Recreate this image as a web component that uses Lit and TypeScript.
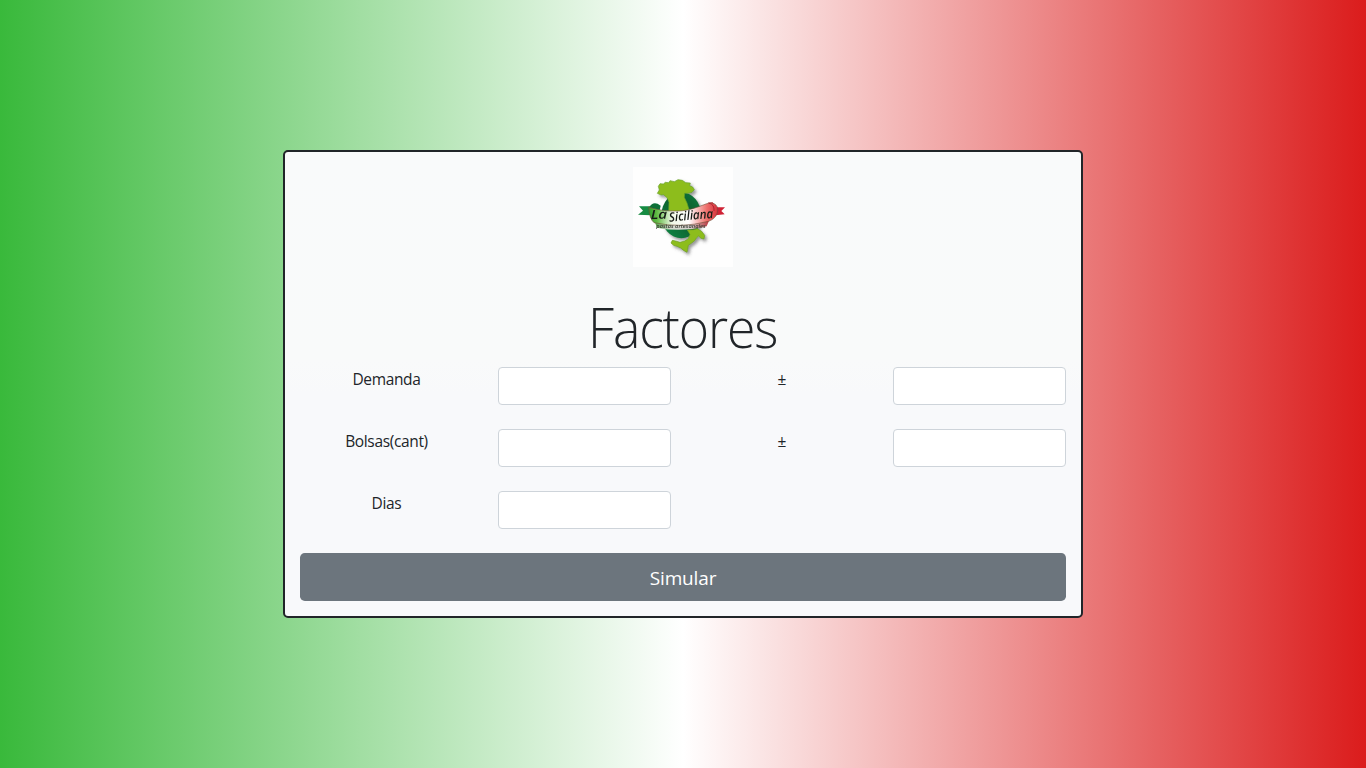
import { LitElement, html, css, svg, nothing } from "lit";
import { customElement } from "lit/decorators.js";

@customElement("siciliana-logo")
class SicilianaLogo extends LitElement {
  static styles = css`
    :host { display: block; width: 100px; height: 100px; }
    .logo { display: block; width: 100%; height: 100%; }
    .brand { font: italic 600 38px "Open Sans", sans-serif; }
    .tag { font: italic 600 14px "Open Sans", sans-serif; }
  `;
  render() {
    return html`<svg class="logo" viewBox="15 15 300 300" role="img" aria-label="La Siciliana">
      ${svg`
      <defs>
        <linearGradient id="ribbon" x1="0" x2="1">
          <stop offset="0" stop-color="#2f9a2c"/><stop offset=".12" stop-color="#62bb45"/>
          <stop offset=".34" stop-color="#f1f8e8"/><stop offset=".58" stop-color="#fff"/>
          <stop offset=".84" stop-color="#ee706c"/><stop offset="1" stop-color="#d62f3b"/>
        </linearGradient>
        <linearGradient id="under" x1="0" x2="1">
          <stop offset="0" stop-color="#4a9b3c"/><stop offset=".3" stop-color="#d5dbd0"/>
          <stop offset=".65" stop-color="#d8d2d0"/><stop offset="1" stop-color="#b8343d"/>
        </linearGradient>
        <linearGradient id="oval" x1="0" x2="1" y1="1" y2="0"><stop offset="0" stop-color="#128a48"/><stop offset=".6" stop-color="#085a2a"/><stop offset="1" stop-color="#118143"/></linearGradient>
        <filter id="shadow" x="-20%" y="-20%" width="150%" height="150%">
          <feDropShadow dx="6" dy="7" stdDeviation="4" flood-color="#444" flood-opacity=".55"/>
        </filter>
        <filter id="soft"><feGaussianBlur stdDeviation=".8"/></filter>
      </defs>
      <rect x="15" y="15" width="300" height="300" fill="#fefefe"/>
      <g filter="url(#soft)">
        <g filter="url(#shadow)">
          <ellipse cx="160" cy="160" rx="60" ry="69" fill="url(#oval)"/>
          <path d="M99 99 88 94 94 84 91 73 96 65 106 66 112 61 122 62 126 56 139 59 150 53 163 55 173 62 187 63 185 71 194 75 199 83 192 91 180 94 170 94 169 106 177 123 186 152 122 152 123 121 118 108 107 98Z" fill="#8dbd1e" stroke="#66a12b" stroke-width="2"/>
          <path d="M178 204 196 203 208 200 221 208 230 220 228 231 219 229 212 222 205 228 200 236 190 244 181 250 179 262 177 271 168 266 158 258 147 253 137 250 129 243 133 235 143 237 156 241 170 237 181 230 186 217Z" fill="#8dbd1e" stroke="#6c9b24" stroke-width="2"/>
        </g>
        <path d="M66 133 33 133 45 146 30 158 68 160Z" fill="#168b43"/>
        <path d="M64 136Q76 114 98 131L94 150 66 151Z" fill="#087039"/>
        <path d="M240 122 254 121 263 136 291 136 280 147 290 157 262 160 252 148Z" fill="#cf2034"/>
        <path d="M79 176Q158 200 244 174L236 193Q158 212 87 197Z" fill="url(#under)"/>
        <path d="M62 135C92 145 122 148 151 147C184 146 207 136 236 125C254 118 271 128 269 145C268 161 257 173 241 178Q158 200 78 182Q64 171 62 135Z" fill="url(#ribbon)" stroke="#714e35" stroke-width="1.8"/>
        <path d="M242 123Q260 127 258 147" fill="none" stroke="#a31926" stroke-width="2.5"/>
        <g fill="#171b16">
          <text class="brand" x="68" y="171" transform="rotate(-1 68 171)" textLength="50" lengthAdjust="spacingAndGlyphs">La</text>
          <text class="brand" x="124" y="179" transform="rotate(-5 124 179)" textLength="133" lengthAdjust="spacingAndGlyphs">Siciliana</text>
        </g>
        <text class="tag" x="85" y="199" fill="#393c34" textLength="148" lengthAdjust="spacingAndGlyphs">pastas artesanales</text>
      </g>`}
    </svg>`;
  }
}

@customElement("app-root")
class AppRoot extends LitElement {
  static styles = css`
    :host {
      display: flex; align-items: center; justify-content: center;
      height: 100vh; color: #212529;
      font: 400 16px/24px "Open Sans", "Noto Sans", sans-serif;
      background: linear-gradient(90deg, #39b93b 0%, #fff 50%, #db1c1c 100%);
    }
    * { box-sizing: border-box; }
    .card {
      width: 800px; height: 468px; padding: 15px; border: 2px solid #212529;
      border-radius: 5px; background: linear-gradient(#f9fafb, #f9fafa 45%, #f8f9fb 52%);
      display: flex; flex-direction: column; align-items: center;
    }
    .title {
      margin: 26px 0 7px; font-size: 55px; line-height: 67px; font-weight: 300;
      letter-spacing: -1.2px; height: 67px; transform: scaleX(0.94);
    }
    .form { width: 100%; display: grid; gap: 24px; }
    .row { display: grid; grid-template-columns: repeat(4, 173px); justify-content: space-between; height: 38px; text-align: center; }
    .label { font-size: 15.5px; letter-spacing: -0.35px; }
    .input { width: 100%; height: 38px; border: 1px solid #ced4da; border-radius: 4px; background: #fff; padding: 6px 12px; font: inherit; }
    .button {
      width: 100%; height: 48px; border: 0; border-radius: 4.8px; color: #fff;
      background: #6c757d; font: 400 19px/30px "Open Sans", sans-serif; letter-spacing: -0.15px; padding: 9px 16px 7px;
    }
  `;
  rows = [
    { label: "Demanda", range: true },
    { label: "Bolsas(cant)", range: true },
    { label: "Dias", range: false },
  ];
  render() {
    return html`<main class="card">
      <siciliana-logo></siciliana-logo>
      <h1 class="title">Factores</h1>
      <form class="form">
        ${this.rows.map((r) => html`<div class="row">
          <label class="label">${r.label}</label>
          <input class="input" aria-label=${r.label} />
          ${r.range ? html`<span class="label">±</span><input class="input" aria-label="± ${r.label}" />` : nothing}
        </div>`)}
        <button class="button" type="button">Simular</button>
      </form>
    </main>`;
  }
}
